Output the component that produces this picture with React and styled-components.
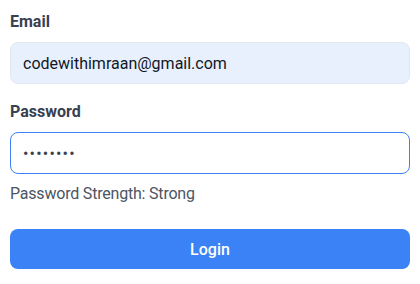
import React from "react";
import styled, { createGlobalStyle } from "styled-components";

const Global = createGlobalStyle`
  html, body { margin: 0; padding: 0; background: #ffffff; }
  body { font-family: Roboto, "Noto Sans", sans-serif; }
  * { box-sizing: border-box; }
`;

const Form = styled.form`
  display: flex;
  flex-direction: column;
  width: 420px;
  padding: 10px 10px;
`;

const Field = styled.div`
  display: flex;
  flex-direction: column;
  gap: 8px;
  margin-bottom: ${(p) => p.$mb || 0}px;
`;

const Label = styled.label`
  font-size: 16px;
  line-height: 24px;
  font-weight: 700;
  color: #374151;
`;

const Input = styled.input`
  width: 100%;
  height: 42px;
  padding: 8px 12px;
  font-family: Roboto, "Noto Sans", sans-serif;
  font-size: 16px;
  line-height: 24px;
  color: #111827;
  border-radius: 8px;
  border: 1px solid ${(p) => (p.$focused ? "#3b82f6" : "#e2e8f0")};
  background: ${(p) => (p.$filled ? "#e8f0fe" : "#ffffff")};
  outline: none;
  &[type="password"] {
    color: #374151;
    letter-spacing: 1.2px;
  }
`;

const Hint = styled.p`
  margin: 9px 0 0;
  font-size: 16px;
  line-height: 22px;
  letter-spacing: -0.2px;
  color: #4b5563;
`;

const Button = styled.button`
  margin-top: 24px;
  height: 40px;
  width: 100%;
  border: none;
  border-radius: 8px;
  background: #3b82f6;
  color: #ffffff;
  font-family: Roboto, "Noto Sans", sans-serif;
  font-size: 16px;
  font-weight: 500;
  cursor: pointer;
`;

export default function App() {
  return (
    <>
      <Global />
      <Form onSubmit={(e) => e.preventDefault()}>
        <Field $mb={16}>
          <Label>Email</Label>
          <Input type="email" readOnly value="codewithimraan@gmail.com" $filled />
        </Field>
        <Field>
          <Label>Password</Label>
          <Input type="password" readOnly value="12345678" $focused />
        </Field>
        <Hint>Password Strength: Strong</Hint>
        <Button type="submit">Login</Button>
      </Form>
    </>
  );
}
